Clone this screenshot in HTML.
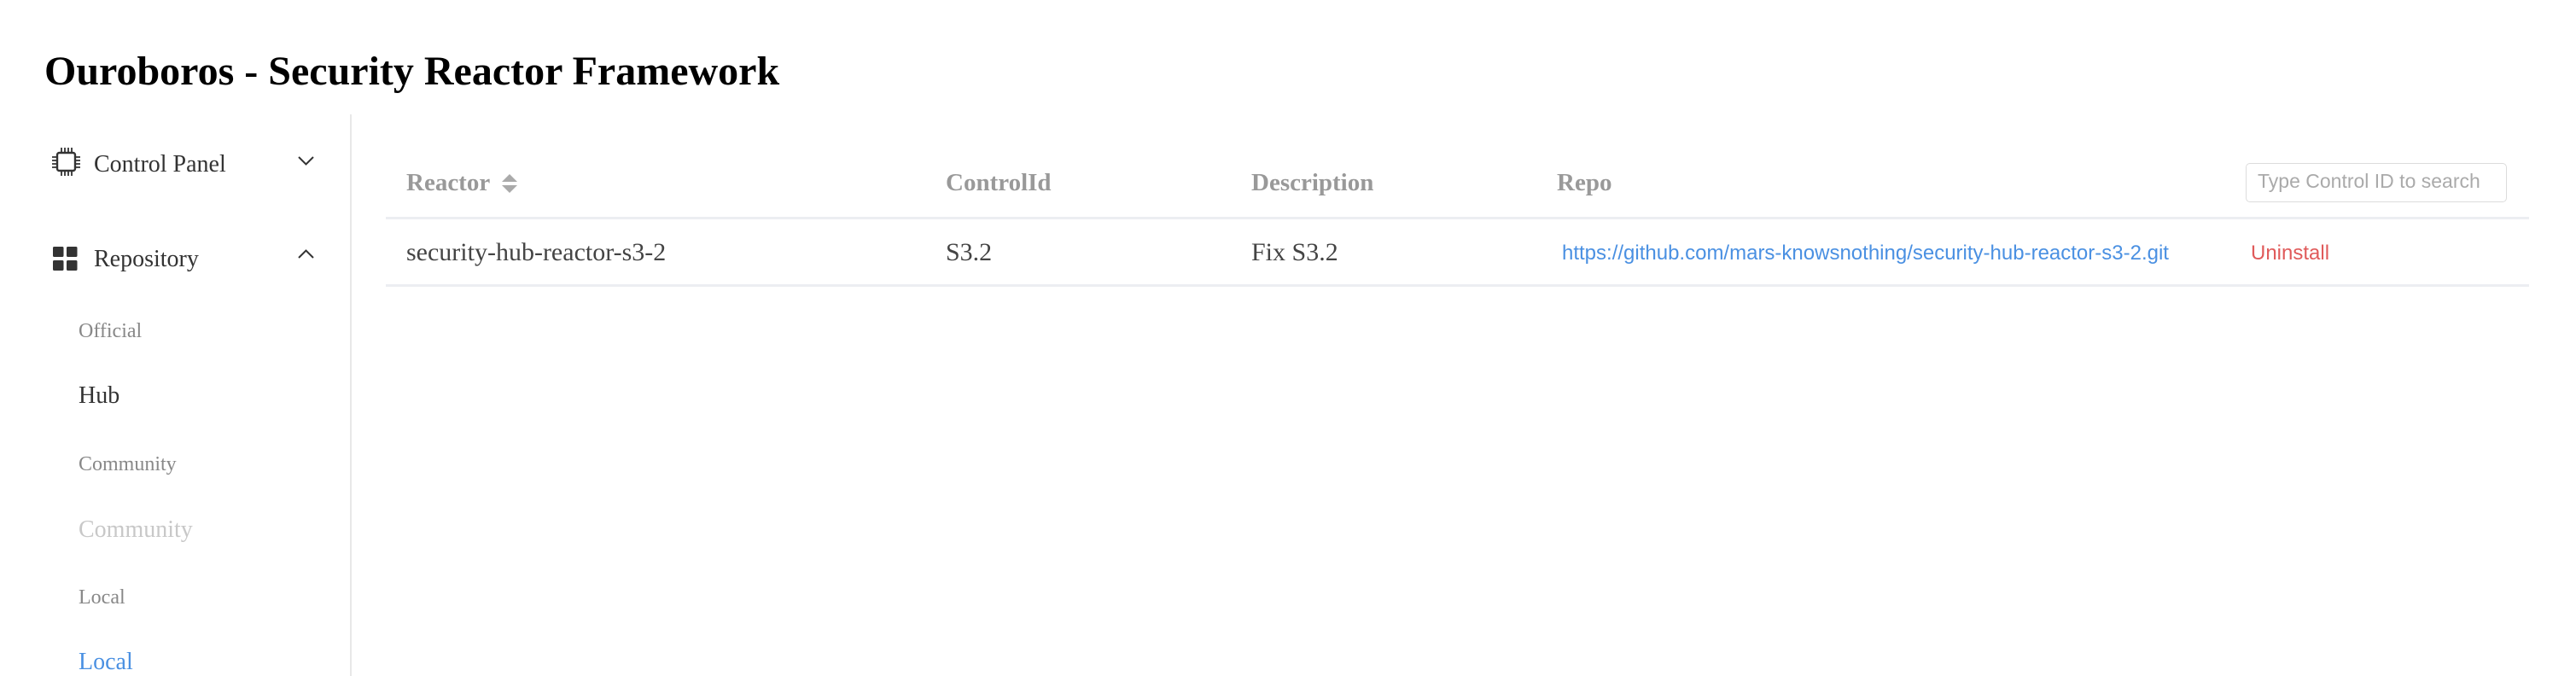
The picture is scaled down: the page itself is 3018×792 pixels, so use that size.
<!DOCTYPE html>
<html><head><meta charset="utf-8"><style>
html,body{margin:0;padding:0;background:#fff;width:3018px;height:792px;overflow:hidden;position:relative;font-family:"Liberation Serif",serif}
.t{position:absolute;white-space:nowrap;line-height:1}
.s{font-family:"Liberation Sans",sans-serif}
</style></head><body>
<div class="t" style="left:52px;top:60px;font-size:48px;font-weight:bold;color:#000">Ouroboros - Security Reactor Framework</div>
<div style="position:absolute;left:410px;top:134px;width:2px;height:658px;background:#e8e8e8"></div>

<svg style="position:absolute;left:61px;top:172px" width="33" height="35" viewBox="0 0 33 35" fill="none" stroke="#333" stroke-width="2.4">
<rect x="6" y="7" width="21" height="21" rx="2.5"/>
<path d="M11 1v6M15 1v6M19 1v6M23 1v6M11 28v6M15 28v6M19 28v6M23 28v6M0 12h6M0 16h6M0 20h6M0 24h6M27 12h6M27 16h6M27 20h6M27 24h6" stroke-width="1.8"/>
</svg>
<div class="t" style="left:110px;top:179px;font-size:28px;color:#333">Control Panel</div>
<svg style="position:absolute;left:349px;top:182px" width="19" height="12" viewBox="0 0 19 12" fill="none" stroke="#333" stroke-width="2"><path d="M1 2l8.5 8.5L18 2"/></svg>

<svg style="position:absolute;left:62px;top:289px" width="29" height="28" viewBox="0 0 29 28" fill="#333">
<rect x="0" y="0" width="12.5" height="12" rx="1.5"/><rect x="16" y="0" width="12.5" height="12" rx="1.5"/>
<rect x="0" y="16" width="12.5" height="12" rx="1.5"/><rect x="16" y="16" width="12.5" height="12" rx="1.5"/>
</svg>
<div class="t" style="left:110px;top:290px;font-size:28px;color:#333">Repository</div>
<svg style="position:absolute;left:349px;top:292px" width="19" height="12" viewBox="0 0 19 12" fill="none" stroke="#333" stroke-width="2"><path d="M1 10l8.5-8.5L18 10"/></svg>

<div class="t" style="left:92px;top:376px;font-size:24px;color:#888">Official</div>
<div class="t" style="left:92px;top:450px;font-size:28px;color:#333">Hub</div>
<div class="t" style="left:92px;top:532px;font-size:24px;color:#888">Community</div>
<div class="t" style="left:92px;top:607px;font-size:28px;color:#c8c8c8">Community</div>
<div class="t" style="left:92px;top:688px;font-size:24px;color:#888">Local</div>
<div class="t" style="left:92px;top:762px;font-size:28px;color:#4a90e2">Local</div>

<div class="t" style="left:476px;top:200px;font-size:29px;font-weight:bold;color:#999">Reactor</div>
<svg style="position:absolute;left:587px;top:203px" width="20" height="24" viewBox="0 0 20 24" fill="#aaa"><path d="M10 1L19 10H1z"/><path d="M10 23L19 14H1z"/></svg>
<div class="t" style="left:1108px;top:200px;font-size:29px;font-weight:bold;color:#999">ControlId</div>
<div class="t" style="left:1466px;top:200px;font-size:29px;font-weight:bold;color:#999">Description</div>
<div class="t" style="left:1824px;top:200px;font-size:29px;font-weight:bold;color:#999">Repo</div>
<div style="position:absolute;left:2631px;top:191px;width:304px;height:44px;border:1.5px solid #dcdcdc;border-radius:5px"></div>
<div class="t s" style="left:2645px;top:201px;font-size:23px;color:#aaa">Type Control ID to search</div>

<div style="position:absolute;left:452px;top:254px;width:2511px;height:3px;background:#eceef2"></div>
<div class="t" style="left:476px;top:281px;font-size:30px;color:#444">security-hub-reactor-s3-2</div>
<div class="t" style="left:1108px;top:281px;font-size:30px;color:#444">S3.2</div>
<div class="t" style="left:1466px;top:281px;font-size:30px;color:#444">Fix S3.2</div>
<div class="t s" style="left:1830px;top:285px;font-size:24px;color:#4a90e2">https://github.com/mars-knowsnothing/security-hub-reactor-s3-2.git</div>
<div class="t s" style="left:2637px;top:285px;font-size:24px;color:#e05a5a">Uninstall</div>
<div style="position:absolute;left:452px;top:333px;width:2511px;height:3px;background:#eceef2"></div>
</body></html>
